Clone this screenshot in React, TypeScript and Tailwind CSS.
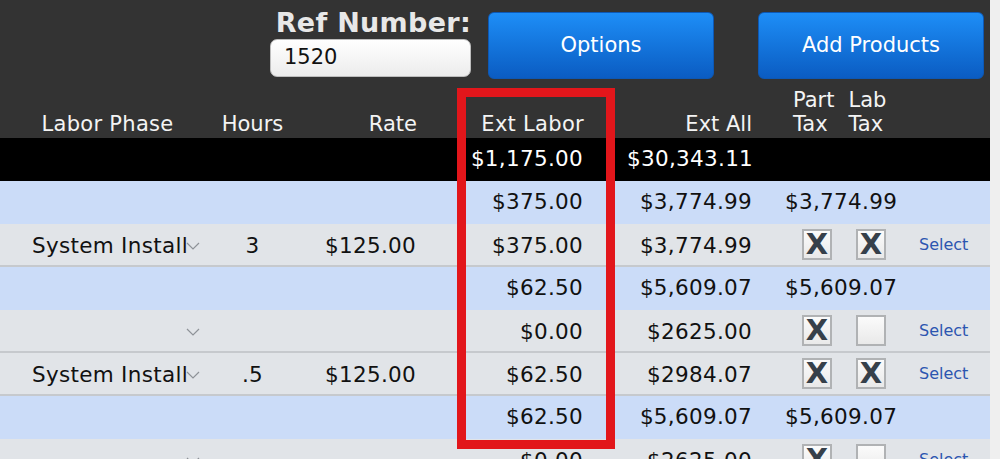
import React from "react"

const font = "font-['Verdana','DejaVu_Sans',sans-serif]"

const cols = "grid grid-cols-[205px_95px_130px_170px_165px_140px_85px]"

function Chevron() {
  return (
    <svg width="14" height="8" viewBox="0 0 14 8" className="shrink-0 relative">
      <polyline points="1,1 7,7 13,1" fill="none" stroke="#8e9298" strokeWidth="1.2" />
    </svg>
  )
}

function Check({ on }: { on: boolean }) {
  return (
    <div className="w-[30px] h-[31px] border-2 border-[#b0b2b4] bg-gradient-to-b from-[#fbfbfb] to-[#e9e9e9] flex items-center justify-center">
      {on && (
        <span className="font-['DejaVu_Sans',sans-serif] font-bold text-[29px] leading-none text-[#36404a]">X</span>
      )}
    </div>
  )
}

type Sub = { labor: string; all: string; tax: string }
type Line = { phase?: string; hours?: string; rate?: string; labor: string; all: string; part: boolean; lab: boolean }

function SubRow({ r }: { r: Sub }) {
  return (
    <div className={`${cols} h-[43px] items-center bg-[#cbdcf8] text-[21.5px] tracking-[0.3px] text-[#111]`}>
      <div />
      <div />
      <div />
      <div className="text-right pr-[17px]">{r.labor}</div>
      <div className="text-right pr-[13px]">{r.all}</div>
      <div className="pl-[20px] whitespace-nowrap">{r.tax}</div>
      <div />
    </div>
  )
}

function LineRow({ r }: { r: Line }) {
  return (
    <div className={`${cols} h-[43px] pt-[3px] items-center bg-[#e1e4e8] border-b-2 border-[#c6c9cd] text-[21.5px] tracking-[0.3px] text-[#111]`}>
      <div className="flex items-center pl-[32px]">
        <span className="w-[154px] shrink-0 whitespace-nowrap">{r.phase ?? ""}</span>
        <Chevron />
      </div>
      <div className="text-center">{r.hours ?? ""}</div>
      <div className="text-right pr-[14px]">{r.rate ?? ""}</div>
      <div className="text-right pr-[17px]">{r.labor}</div>
      <div className="text-right pr-[13px]">{r.all}</div>
      <div className="flex pl-[37px] gap-[24px] -mt-[3px]">
        <Check on={r.part} />
        <Check on={r.lab} />
      </div>
      <div className="pl-[14px] text-[16px] tracking-normal text-[#2c55b0] -mt-[3px]">Select</div>
    </div>
  )
}

export default function App() {
  return (
    <div className={`relative w-[1000px] h-[459px] overflow-hidden bg-[#efefef] ${font}`}>
      <div className="w-[990px]">
        {/* Top bar */}
        <div className="bg-[#333333]">
          <div className="h-[88px] flex items-start">
            <div className="ml-[270px] w-[201px] flex flex-col items-end">
              <div className="mt-[9px] text-[27px] leading-[27px] tracking-[0.3px] font-bold text-[#e8e8e8]">Ref Number:</div>
              <div className="mt-[3px] w-full h-[38px] rounded-[7px] border border-[#bdbdbd] bg-gradient-to-b from-white to-[#ececec] flex items-center pl-[13px] text-[21px] text-[#111]">
                1520
              </div>
            </div>
            <button className="ml-[17px] mt-[12px] w-[226px] h-[67px] rounded-[6px] border border-[#0d58b5] bg-gradient-to-b from-[#1e8ef7] to-[#0b5cc2] text-white text-[21px]">
              Options
            </button>
            <button className="ml-[44px] mt-[12px] w-[226px] h-[67px] rounded-[6px] border border-[#0d58b5] bg-gradient-to-b from-[#1e8ef7] to-[#0b5cc2] text-white text-[21px]">
              Add Products
            </button>
          </div>
          <div className={`${cols} h-[50px] items-end pb-[2px] text-[21px] leading-[24px] text-[#f4f4f4]`}>
            <div className="text-center pl-[10px] tracking-[0.3px]">Labor Phase</div>
            <div className="text-center">Hours</div>
            <div className="text-right pr-[13px]">Rate</div>
            <div className="text-right pr-[16px] tracking-[0.3px]">Ext Labor</div>
            <div className="text-right pr-[13px]">Ext All</div>
            <div className="flex pl-[28px] gap-[14px]">
              <div>Part<br />Tax</div>
              <div>Lab<br />Tax</div>
            </div>
            <div />
          </div>
        </div>

        {/* Totals */}
        <div className={`${cols} h-[43px] items-center bg-black text-[21.5px] tracking-[0.3px] text-white`}>
          <div />
          <div />
          <div />
          <div className="text-right pr-[17px]">$1,175.00</div>
          <div className="pl-[27px]">$30,343.11</div>
          <div />
          <div />
        </div>

        <SubRow r={{ labor: "$375.00", all: "$3,774.99", tax: "$3,774.99" }} />
        <LineRow r={{ phase: "System Install", hours: "3", rate: "$125.00", labor: "$375.00", all: "$3,774.99", part: true, lab: true }} />
        <SubRow r={{ labor: "$62.50", all: "$5,609.07", tax: "$5,609.07" }} />
        <LineRow r={{ labor: "$0.00", all: "$2625.00", part: true, lab: false }} />
        <LineRow r={{ phase: "System Install", hours: ".5", rate: "$125.00", labor: "$62.50", all: "$2984.07", part: true, lab: true }} />
        <SubRow r={{ labor: "$62.50", all: "$5,609.07", tax: "$5,609.07" }} />
        <LineRow r={{ labor: "$0.00", all: "$2625.00", part: true, lab: false }} />
      </div>

      {/* Highlight annotation */}
      <div className="absolute left-[457px] top-[88px] w-[158px] h-[361px] border-[9px] border-[#e2161b] pointer-events-none" />
    </div>
  )
}
